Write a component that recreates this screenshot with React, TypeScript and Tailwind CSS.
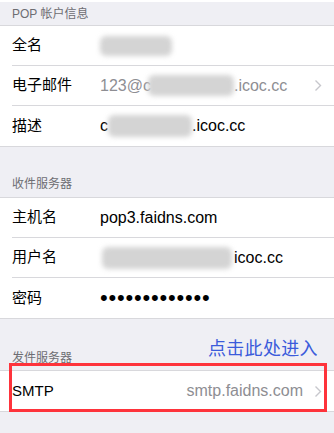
import React from "react";

const font = { fontFamily: '"Liberation Sans", "Noto Sans CJK SC", sans-serif' };

function Chevron() {
  return (
    <svg width="8" height="13" viewBox="0 0 8 13" className="shrink-0">
      <polyline points="1.5,1.5 6.5,6.5 1.5,11.5" fill="none" stroke="#c7c7cc" strokeWidth="1.4" />
    </svg>
  );
}

// flou gris qui masque une partie de l'adresse
function Blur({ w, h = 20, className = "" }: { w: number; h?: number; className?: string }) {
  return (
    <span
      className={"inline-block rounded-md bg-[#d4d4d4] blur-[2.5px] align-middle " + className}
      style={{ width: w, height: h }}
    />
  );
}

function Row({ label, children, last, chevron }: { label: string; children?: React.ReactNode; last?: boolean; chevron?: boolean }) {
  return (
    <div className="flex h-[40px] pl-3">
      <div className={"flex flex-1 items-center pr-3 " + (last ? "" : "border-b border-[#d8d8dc]")}>
        <div className="w-[88px] shrink-0 text-[15px] text-black">{label}</div>
        <div className="flex flex-1 items-center text-[16px] text-black whitespace-nowrap">{children}</div>
        {chevron && <Chevron />}
      </div>
    </div>
  );
}

function Header({ title, className }: { title: string; className: string }) {
  return (
    <div className={"flex items-end pl-3 text-[12px] leading-none text-[#6d6d72] " + className}>{title}</div>
  );
}

export default function App() {
  return (
    <div className="relative h-[433px] w-[334px] overflow-hidden bg-[#efeff4]" style={font}>
      <div className="h-[2px] bg-white" />
      <Header title="POP 帐户信息" className="h-[23px] pb-[5px]" />
      <div className="border-y border-[#d8d8dc] bg-white">
        <Row label="全名">
          <Blur w={72} h={20} />
        </Row>
        <Row label="电子邮件" chevron>
          <span className="text-[#8e8e93]">123@c</span>
          <Blur w={86} h={21} className="-ml-[3px]" />
          <span className="text-[#8e8e93]">.icoc.cc</span>
          <span className="flex-1" />
        </Row>
        <Row label="描述" last>
          <span>c</span>
          <Blur w={84} h={22} />
          <span>.icoc.cc</span>
        </Row>
      </div>

      <Header title="收件服务器" className="h-[50px] pb-[7px]" />
      <div className="border-y border-[#d8d8dc] bg-white">
        <Row label="主机名">pop3.faidns.com</Row>
        <Row label="用户名">
          <Blur w={130} h={22} className="ml-[2px]" />
          <span className="ml-[2px]">icoc.cc</span>
        </Row>
        <Row label="密码" last>
          <span className="flex">
            {Array.from({ length: 13 }).map((_, i) => (
              <span key={i} className="w-[8.5px] text-[22px] leading-none">•</span>
            ))}
          </span>
        </Row>
      </div>

      <Header title="发件服务器" className="h-[51px] pb-[6px]" />
      <div className="border-y border-[#d8d8dc] bg-white">
        <Row label="SMTP" last chevron>
          <span className="flex-1" />
          <span className="mr-[11px] text-[#8e8e93]">smtp.faidns.com</span>
        </Row>
      </div>

      <div className="absolute left-[208px] top-[338px] text-[18px] leading-[22px] tracking-[0.3px] text-[#3b5bdb]">
        点击此处进入
      </div>
      <div className="absolute left-[9px] top-[363px] h-[49px] w-[318px] border-[3px] border-[#fe333b]" />
    </div>
  );
}
